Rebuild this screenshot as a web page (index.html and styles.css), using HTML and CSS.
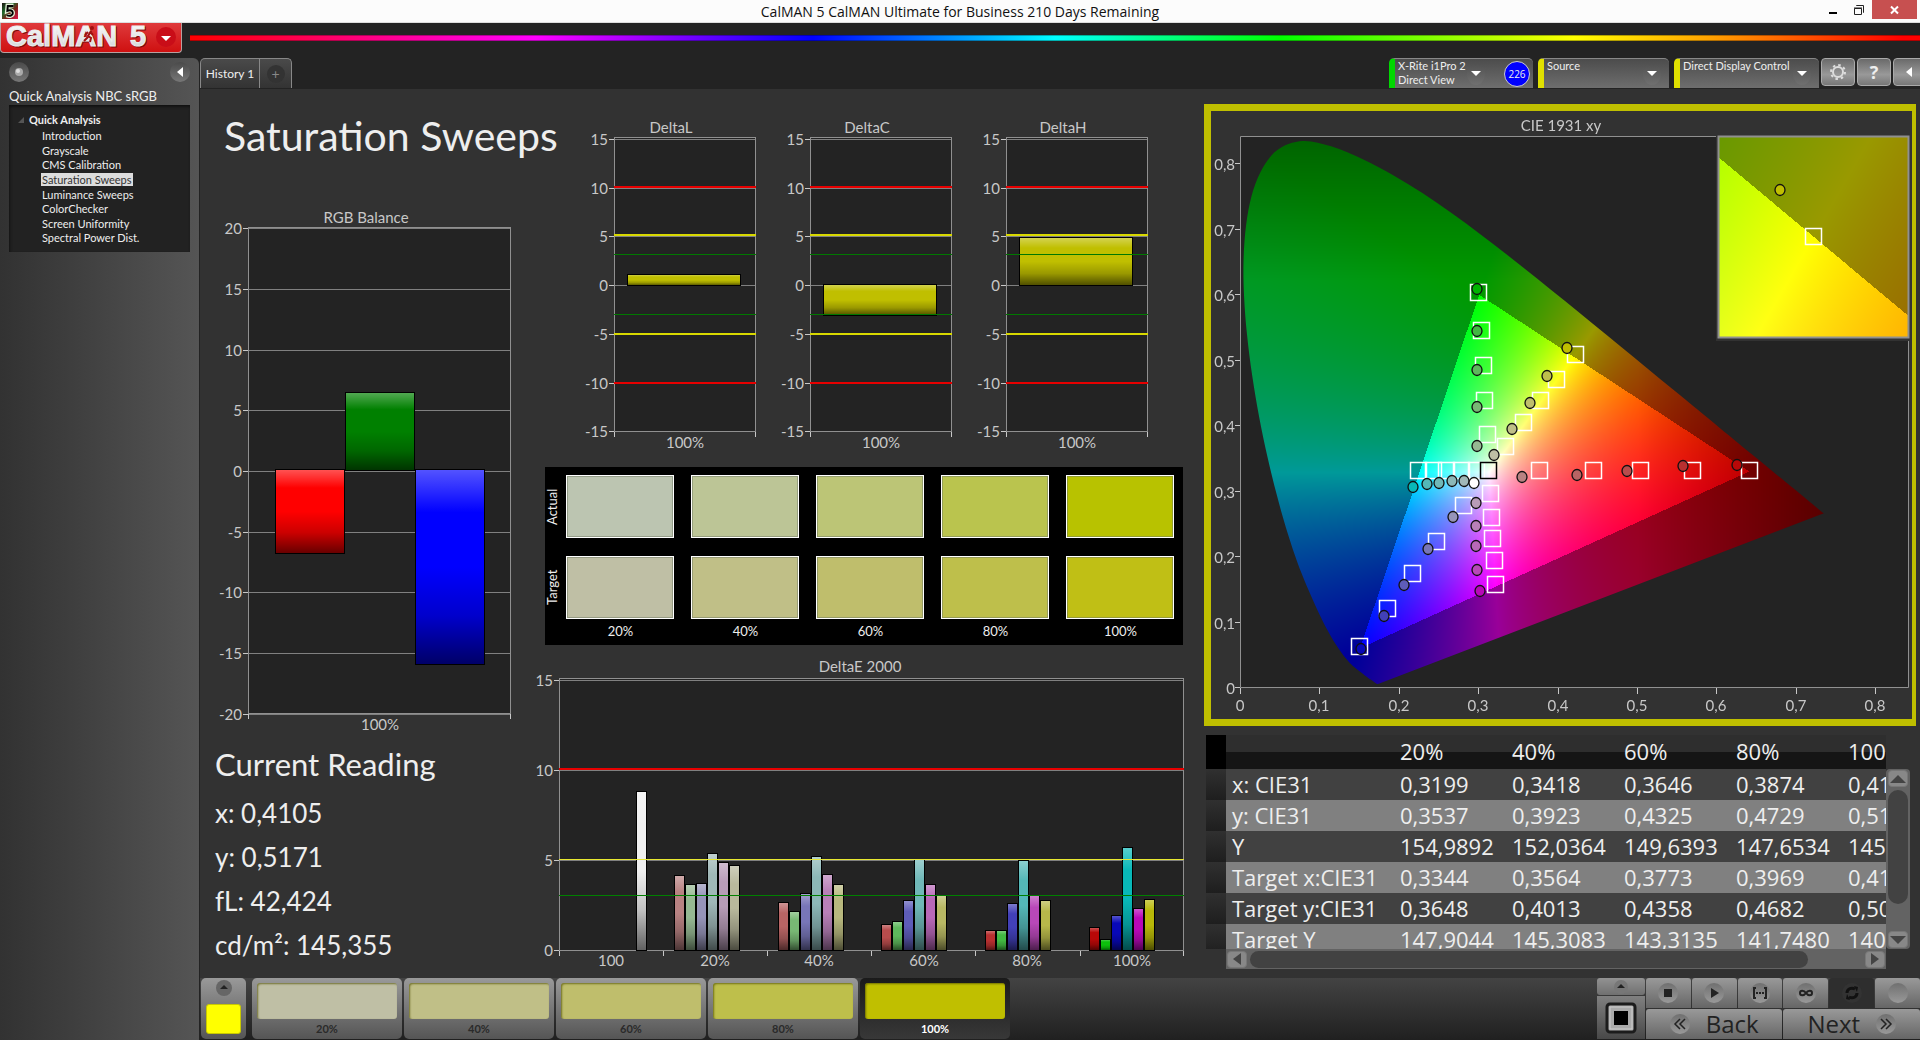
FILE: index.html
```html
<!DOCTYPE html>
<html lang="en">
<head>
<meta charset="utf-8">
<title>CalMAN 5 CalMAN Ultimate for Business 210 Days Remaining</title>
<link rel="stylesheet" href="styles.css">
</head>
<body>
<div class="titlebar">
  <svg class="app-icon" viewBox="0 0 16 16" aria-hidden="true">
    <defs><linearGradient id="app" x1="0" y1="0" x2="1" y2="1"><stop offset="0" stop-color="#1d1410"/><stop offset=".35" stop-color="#1f6b2c"/><stop offset=".6" stop-color="#7c2018"/><stop offset="1" stop-color="#e01850"/></linearGradient></defs>
    <rect width="16" height="16" fill="url(#app)"/>
    <path d="M11.5 2.5H5.5L5 8c3-1.500 6-.500 6 2s-3 4-6.500 2.500" fill="none" stroke="#e4f0d8" stroke-width="4"/>
    <path d="M11.500 3H5.800L5.400 7.800c3-1.200 5.400-.300 5.400 2.200s-3 3.600-6 2.200" fill="none" stroke="#000" stroke-width="2"/>
  </svg>
  <span class="window-title">CalMAN 5 CalMAN Ultimate for Business 210 Days Remaining</span>
  <div class="window-buttons">
    <button class="win" aria-label="Minimize"><svg width="12" height="12"><path d="M2 8h8v2H2z"/></svg></button>
    <button class="win" aria-label="Restore"><svg width="12" height="12"><path d="M1.500 4.500h7v6h-7zM1 4h8M3.500 2V1.500h7v7H10" fill="none" stroke="#222"/></svg></button>
    <button class="win close" aria-label="Close"><svg width="12" height="12"><path d="M2 2.500l7 7M9 2.500l-7 7" stroke="#fff" stroke-width="2"/></svg></button>
  </div>
</div>

<header class="brand">
  <button class="logo" aria-label="CalMAN 5 menu">
    <svg viewBox="0 0 182 29" width="182" height="29">
      <defs><linearGradient id="steel" x1="0" y1="0" x2="0" y2="1"><stop offset="0" stop-color="#fff"/><stop offset="1" stop-color="#cdd2d4"/></linearGradient></defs>
      <g font-family="Liberation Sans, sans-serif" font-weight="700" font-size="29" stroke-width="1">
        <text x="6" y="24" fill="#7d0b0b" stroke="#7d0b0b">CalMAN</text><text x="130" y="24" fill="#7d0b0b" stroke="#7d0b0b">5</text>
        <text x="5" y="23" fill="url(#steel)" stroke="#eee">CalMAN</text><text x="129" y="23" fill="url(#steel)" stroke="#eee">5</text>
      </g>
      <path d="M90 8l-3 5 3 2-1 4M87 9l-3 3M89 9l3 3M87 14l-4 4" stroke="#a01010" stroke-width="2" fill="none"/>
      <circle cx="91" cy="5" r="2" fill="#a01010"/>
      <ellipse cx="165" cy="14" rx="10" ry="10" fill="#c90d18"/>
      <path d="M160 13h10l-5 5z" fill="#fff"/>
    </svg>
  </button>
  <div class="spectrum"></div>
</header>

<div class="shell">
  <aside class="sidebar">
    <div class="side-tools">
      <button class="knob" aria-label="Record"><svg width="20" height="20"><circle cx="10" cy="10" r="4" fill="#aaa"/><circle cx="9" cy="9" r="2" fill="#ddd"/></svg></button>
      <button class="knob" aria-label="Collapse"><svg width="20" height="20"><path d="M13 5v10l-6-5z" fill="#fff"/></svg></button>
    </div>
    <h2 class="side-title">Quick Analysis NBC sRGB</h2>
    <nav class="tree">
      <div class="branch"><svg width="6" height="6"><path d="M6 0v6H0z" fill="#555"/></svg>Quick Analysis</div>
      <ul>
        <li><a href="#">Introduction</a></li>
        <li><a href="#">Grayscale</a></li>
        <li><a href="#">CMS Calibration</a></li>
        <li><a href="#" class="current">Saturation Sweeps</a></li>
        <li><a href="#">Luminance Sweeps</a></li>
        <li><a href="#">ColorChecker</a></li>
        <li><a href="#">Screen Uniformity</a></li>
        <li><a href="#">Spectral Power Dist.</a></li>
      </ul>
    </nav>
  </aside>

  <div class="workspace">
    <div class="toolbar">
      <div class="tabs">
        <button class="tab">History 1</button>
        <button class="tab add" aria-label="Add tab"><span class="plus">+</span></button>
      </div>
      <div class="devices">
        <div class="device meter"><button class="device-name">X-Rite i1Pro 2<br>Direct View</button><span class="drop"></span><span class="badge">226</span></div>
        <div class="device source"><button class="device-name">Source</button><span class="drop"></span></div>
        <div class="device display"><button class="device-name">Direct Display Control</button><span class="drop"></span></div>
        <button class="tool" aria-label="Settings"><svg width="22" height="22"><circle cx="11" cy="11" r="5" fill="none" stroke="#ddd" stroke-width="2"/><circle cx="11" cy="11" r="7" fill="none" stroke="#ddd" stroke-width="2" stroke-dasharray="2.500 3"/></svg></button>
        <button class="tool help" aria-label="Help">?</button>
        <button class="tool cut" aria-label="Expand"><svg width="20" height="20"><path d="M12 5v10l-6-5z" fill="#fff"/></svg></button>
      </div>
    </div>

    <main class="content">
      <section class="col-left">
        <h1>Saturation Sweeps</h1>
        <svg class="chart" id="rgb" viewBox="0 0 330 525"></svg>
        <div class="readings">
          <h2>Current Reading</h2>
          <p>x: 0,4105</p>
          <p>y: 0,5171</p>
          <p>fL: 42,424</p>
          <p>cd/m²: 145,355</p>
        </div>
      </section>

      <section class="col-mid">
        <div class="deltas">
          <svg class="chart" id="deltaL" viewBox="0 0 196 341"></svg>
          <svg class="chart" id="deltaC" viewBox="0 0 196 341"></svg>
          <svg class="chart" id="deltaH" viewBox="0 0 196 341"></svg>
        </div>
        <div class="swatches">
          <span class="side">Actual</span>
          <i class="sw a20"></i><i class="sw a40"></i><i class="sw a60"></i><i class="sw a80"></i><i class="sw a100"></i>
          <span class="side">Target</span>
          <i class="sw t20"></i><i class="sw t40"></i><i class="sw t60"></i><i class="sw t80"></i><i class="sw t100"></i>
          <span></span><b>20%</b><b>40%</b><b>60%</b><b>80%</b><b>100%</b>
        </div>
        <svg class="chart" id="deltaE" viewBox="0 0 670 325"></svg>
      </section>

      <section class="col-right">
        <div class="cie">
          <canvas id="gamut" width="701" height="608"></canvas>
          <svg class="chart" id="cie" viewBox="1211 111 701 608"></svg>
        </div>
        <div class="grid-box">
          <div class="grid-view">
            <table>
              <colgroup><col class="c-head"><col class="c-label"><col class="c-val"><col class="c-val"><col class="c-val"><col class="c-val"><col class="c-val"></colgroup>
              <thead><tr><td></td><td></td><th>20%</th><th>40%</th><th>60%</th><th>80%</th><th>100%</th></tr></thead>
              <tbody>
                <tr><td></td><th>x: CIE31</th><td>0,3199</td><td>0,3418</td><td>0,3646</td><td>0,3874</td><td>0,4105</td></tr>
                <tr><td></td><th>y: CIE31</th><td>0,3537</td><td>0,3923</td><td>0,4325</td><td>0,4729</td><td>0,5171</td></tr>
                <tr><td></td><th>Y</th><td>154,9892</td><td>152,0364</td><td>149,6393</td><td>147,6534</td><td>145,3550</td></tr>
                <tr><td></td><th>Target x:CIE31</th><td>0,3344</td><td>0,3564</td><td>0,3773</td><td>0,3969</td><td>0,4193</td></tr>
                <tr><td></td><th>Target y:CIE31</th><td>0,3648</td><td>0,4013</td><td>0,4358</td><td>0,4682</td><td>0,5053</td></tr>
                <tr><td></td><th>Target Y</th><td>147,9044</td><td>145,3083</td><td>143,3135</td><td>141,7480</td><td>140,3550</td></tr>
              </tbody>
            </table>
          </div>
          <div class="scroll vertical">
            <button aria-label="Scroll up"><svg width="16" height="8"><path d="M0 8h16L8 0z"/></svg></button>
            <span class="thumb"></span>
            <button aria-label="Scroll down"><svg width="16" height="8"><path d="M0 0h16L8 8z"/></svg></button>
          </div>
          <div class="scroll horizontal">
            <button aria-label="Scroll left"><svg width="8" height="12"><path d="M8 0v12L0 6z"/></svg></button>
            <span class="thumb"></span>
            <button aria-label="Scroll right"><svg width="8" height="12"><path d="M0 0v12l8-6z"/></svg></button>
          </div>
        </div>
      </section>
    </main>

    <footer class="dock">
      <button class="pattern" aria-label="Pattern color"><svg width="16" height="16"><circle cx="8" cy="8" r="8" fill="#666"/><path d="M4 9l4-4 4 4z" fill="#222"/></svg><i></i></button>
      <div class="steps">
        <button class="step"><i class="t20"></i>20%</button>
        <button class="step"><i class="t40"></i>40%</button>
        <button class="step"><i class="t60"></i>60%</button>
        <button class="step"><i class="t80"></i>80%</button>
        <button class="step active"><i class="y100"></i>100%</button>
      </div>
      <div class="window-mode">
        <button aria-label="Show more"><svg width="16" height="16"><circle cx="8" cy="8" r="7" fill="#777"/><path d="M4 9l4-4 4 4z" fill="#222"/></svg></button>
        <button aria-label="Window size"><svg width="32" height="32"><rect x="2" y="2" width="28" height="28" rx="3" fill="#aaa" stroke="#1c1c1c" stroke-width="3"/><rect x="5" y="5" width="22" height="22" fill="none" stroke="#ccc"/><path d="M9 9h14v14H9z"/></svg></button>
      </div>
      <div class="transport">
        <button aria-label="Stop"><svg width="20" height="20"><path d="M6 6h8v8H6z"/></svg></button>
        <button aria-label="Play"><svg width="20" height="20"><path d="M7 5v10l8-5z"/></svg></button>
        <button aria-label="Read series"><svg width="20" height="20"><path d="M6 5H4v10h2M14 5h2v10h-2M6 10h2M9 10h2M12 10h2" fill="none" stroke="#222" stroke-width="2"/></svg></button>
        <button aria-label="Read continuous"><svg width="20" height="20"><path d="M10 10c-2-3-6-3-6 0s4 3 6 0 6-3 6 0-4 3-6 0z" fill="none" stroke="#222" stroke-width="2"/></svg></button>
        <button class="pressed" aria-label="Refresh"><svg width="20" height="20"><path d="M5 10c0-4 4-6 8-4M15 10c0 4-4 6-8 4" fill="none" stroke="#111" stroke-width="3"/><path d="M12 3l4 1-1 5zM8 17l-4-1 1-5z" fill="#111"/></svg></button>
        <button aria-label="Blank"><svg width="20" height="20"></svg></button>
        <button class="wide"><svg width="20" height="20"><path d="M10 5l-5 5 5 5M15 5l-5 5 5 5" fill="none" stroke="#222" stroke-width="1.500"/></svg>Back</button>
        <button class="wide">Next<svg width="20" height="20"><path d="M5 5l5 5-5 5M10 5l5 5-5 5" fill="none" stroke="#222" stroke-width="1.500"/></svg></button>
      </div>
    </footer>
  </div>
</div>
<script src="charts.js"></script>
</body>
</html>
```
FILE: styles.css
```css
* { box-sizing: border-box; }
body {
  margin: 0;
  min-height: 100vh;
  display: flex;
  flex-direction: column;
  background: #232323;
  color: #eee;
  font: 12px/15px Lato, Carlito, sans-serif;
  overflow-x: hidden;
}
button { font: inherit; color: inherit; border: 0; padding: 0; background: none; }
h1, h2, p, ul { margin: 0; padding: 0; font-weight: 400; }
svg { display: block; flex: none; }

.titlebar {
  height: 23px;
  display: grid;
  grid-template-columns: 1fr auto 1fr;
  align-items: start;
  background: #fcfcfc;
  border-bottom: 1px solid #ddd;
  color: #111;
}
.app-icon { width: 16px; height: 16px; margin: 3px 2px; }
.window-title { font: 14px/23px "Open Sans", "Noto Sans", sans-serif; }
.window-buttons { display: flex; justify-content: flex-end; padding-right: 3px; }
.win { width: 26px; height: 19px; display: flex; align-items: center; justify-content: center; }
.win.close { width: 45px; background: #c75050; }

.brand { height: 35px; display: flex; gap: 8px; }
.logo {
  width: 182px;
  height: 30px;
  background: linear-gradient(#df3a3c, #cf1010);
  border: 1px solid #b9a0a0;
  border-width: 0 1px 1px;
  border-radius: 0 0 4px 4px;
}
.spectrum {
  flex: 1;
  height: 6px;
  margin-top: 12px;
  background: linear-gradient(90deg, #f00, #f0f 20%, #00f 36%, #0ff 50%, #0f0 63%, #ff0 80%, #ffa000 88%, #f00 99%);
  border: 1px solid rgba(0, 0, 0, .3);
  border-width: 1px 0;
}

.shell { flex: 1; display: grid; grid-template-columns: 199px minmax(0, 1fr); column-gap: 1px; }
.sidebar {
  padding: 4px 9px 0;
  background: linear-gradient(90deg, #323232, #3c3c3c 30%, #555);
  border-radius: 0 6px 0 0;
}
.side-tools { display: flex; justify-content: space-between; }
.knob { width: 20px; height: 20px; border-radius: 50%; background: linear-gradient(#4a4a4a, #777); }
.side-title { font-size: 13px; line-height: 16px; margin-top: 6px; }
.tree {
  margin-top: 1px;
  height: 147px;
  padding: 7px 0 0 9px;
  background: #222;
  box-shadow: inset 1px 2px 3px #111;
  font-size: 11px;
}
.branch { display: flex; align-items: center; gap: 5px; font-weight: 700; }
.tree ul { list-style: none; display: grid; height: 117px; margin-top: 2px; padding-left: 23px; line-height: 14px; }
.tree a { color: #eee; text-decoration: none; padding: 0 1px; }
.tree .current { background: #ddd; color: #333; }

.workspace { display: flex; flex-direction: column; min-width: 0; }
.toolbar { height: 31px; display: flex; justify-content: space-between; overflow: hidden; }
.tabs { display: flex; height: 30px; border: 1px solid #888; border-bottom: 0; border-radius: 5px 5px 0 0; background: linear-gradient(#4a4a4a, #333); }
.tab { width: 58px; }
.add { width: 32px; border-left: 1px solid #888; display: flex; align-items: center; justify-content: center; }
.plus { width: 18px; height: 18px; border-radius: 50%; background: #333; color: #888; font-size: 14px; line-height: 17px; }
.devices { display: flex; margin-right: -7px; gap: 2px; }
.device {
  height: 30px;
  display: flex;
  align-items: center;
  margin-right: 3px;
  border-top: 1px solid #888;
  border-radius: 5px 5px 0 0;
  border-left: 6px solid #e0e000;
  background: linear-gradient(#4c4c4c, #6e6e6e);
}
.meter { width: 144px; border-left-color: #00d800; }
.source { width: 131px; }
.display { width: 145px; margin-right: 0; }
.device-name { flex: 1; align-self: flex-start; text-align: left; font-size: 11px; line-height: 14px; padding-left: 3px; white-space: nowrap; }
.drop { width: 18px; height: 22px; border-radius: 50%; background: linear-gradient(#505050, #707070); display: flex; align-items: center; justify-content: center; margin-right: 8px; }
.meter .drop { margin-right: 11px; }
.drop::after { content: ""; border: 5px solid transparent; border-top-color: #fff; border-bottom: 0; }
.badge { width: 26px; height: 26px; border-radius: 50%; background: #00f; border: 1px solid #ccc; font: 10px/24px "Open Sans", sans-serif; text-align: center; margin: 0 3px 0 8px; }
.tool { width: 34px; height: 28px; border: 1px solid #aaa; border-radius: 4px; background: linear-gradient(#6a6a6a, #999 60%, #777); display: flex; align-items: center; justify-content: center; }
.help { font: 700 18px/24px "Open Sans", sans-serif; }

.content {
  flex: 1;
  display: grid;
  grid-template-columns: 330fr 670fr 720fr;
  background: #323232;
}
.content > section { min-width: 0; }
.chart { width: 100%; height: auto; font-family: Lato, sans-serif; font-size: 15px; fill: #c8c8c8; }
h1 { font-size: 41px; line-height: 48px; padding: 23px 0 52px 24px; white-space: nowrap; }
.readings { padding-left: 15px; }
.readings h2 { font-size: 31px; line-height: 54px; }
.readings p { font-size: 26px; line-height: 44px; }

.col-mid { padding-top: 24px; }
.deltas { display: grid; grid-template-columns: repeat(3, minmax(0, 1fr)); padding: 0 40px 0 42px; }
.swatches {
  margin: 13px 17px 0 15px;
  height: 178px;
  padding-top: 8px;
  display: grid;
  grid-template-columns: 13px repeat(5, minmax(0, 1fr));
  grid-template-rows: 63px 63px 18px;
  row-gap: 18px;
  background: #000;
  font-size: 13px;
}
.swatches b { font-weight: 400; text-align: center; margin-top: -15px; line-height: 18px; }
.side { writing-mode: vertical-rl; transform: rotate(180deg); text-align: center; }
.sw { border: 1px solid #fff; margin: 0 9px 0 8px; box-shadow: inset 0 0 0 1px rgba(110, 120, 100, .5); }
.a20 { background: #bcc5b1; } .a40 { background: #bcc596; } .a60 { background: #bcc576; }
.a80 { background: #bac44e; } .a100 { background: #b8c200; }
.t20 { background: #bfbfa5; } .t40 { background: #c0bf87; } .t60 { background: #bfbe6c; }
.t80 { background: #bebf4b; } .t100 { background: #c0bf15; } .y100 { background: #c0bf00; }
#deltaE { margin-top: 5px; }

.cie { display: grid; margin: 15px 4px 0; border: 7px solid #bfbf00; border-right-width: 4px; }
.cie > * { grid-area: 1 / 1; width: 100%; height: auto; }

.grid-box {
  margin: 9px 10px 0 6px;
  display: grid;
  grid-template-columns: minmax(0, 1fr) 24px;
  grid-template-rows: 214px 20px;
}
.grid-view { overflow: hidden; }
table { border-collapse: collapse; table-layout: fixed; width: 748px; font: 22px/24px "Open Sans", "Noto Sans", sans-serif; }
.c-head { width: 20px; } .c-label { width: 168px; } .c-val { width: 112px; }
td, th { height: 31px; padding: 0 0 2px 6px; text-align: left; font-weight: 400; white-space: nowrap; }
td:first-child { padding: 0; }
thead { background: linear-gradient(#2e2e2e 50%, #151515 50%); }
thead td, thead th { height: 34px; }
thead td:first-child { background: #000; }
tbody tr { background: #414141; }
tbody tr:nth-child(even) { background: #808080; }
tbody td:first-child { background: linear-gradient(#303030, #1e1e1e); }
.scroll { display: flex; align-items: center; background: #636363; padding: 1px; gap: 3px; }
.scroll button { background: #888; border: 1px solid #777; border-radius: 4px; display: flex; align-items: center; justify-content: center; fill: #444; }
.scroll .thumb { background: #424242; border-radius: 10px; flex: 1; }
.vertical { flex-direction: column; margin-top: 34px; border-radius: 4px; }
.vertical button { width: 20px; height: 17px; }
.vertical .thumb { width: 20px; margin-bottom: 24px; }
.horizontal { margin-left: 20px; }
.horizontal button { width: 20px; height: 17px; }
.horizontal .thumb { height: 17px; margin-right: 54px; }

.dock { height: 62px; display: flex; padding: 0 0 1px 1px; background: linear-gradient(#434343, #202020); }
.pattern, .step { border-radius: 5px; background: linear-gradient(#999, #555); }
.pattern { width: 45px; display: flex; flex-direction: column; align-items: center; justify-content: space-between; padding: 2px 0 5px; }
.pattern i { width: 35px; height: 30px; border-radius: 3px; background: #ff0; border: 1px solid #c8c800; }
.steps { display: flex; gap: 2px; margin-left: 6px; }
.step { width: 150px; padding: 5px 5px 0; color: #2a2a2a; font-size: 11px; font-weight: 700; line-height: 20px; display: flex; flex-direction: column; align-items: center; }
.step i { width: 140px; height: 36px; border-radius: 3px; box-shadow: inset 1px 1px 2px rgba(80, 80, 0, .7); }
.step.active { background: linear-gradient(#1a1a1a, #383838); color: #fff; }
.window-mode { width: 48px; margin-left: auto; display: grid; grid-template-rows: 17px 1fr; row-gap: 1px; }
.window-mode button { background: linear-gradient(#929292, #707070); display: flex; align-items: center; justify-content: center; border-radius: 3px; }
.window-mode button + button { background: linear-gradient(#808080, #484848); border-radius: 0; }
.transport { width: 274px; margin-left: 1px; display: grid; grid-template: 30px 30px / repeat(6, 1fr); gap: 1px; }
.transport button { background: linear-gradient(#999, #666); border-radius: 3px 3px 0 0; display: flex; align-items: center; justify-content: center; fill: #222; color: #222; }
.transport svg { border-radius: 50%; background: linear-gradient(#707070, #999); }
.transport .pressed { background: #2e2e2e; }
.transport .pressed svg { background: #333; }
.transport .wide { grid-column: span 3; gap: 16px; font: 24px/28px "Open Sans", "Noto Sans", sans-serif; }
```
FILE: charts.js
```js
const NS = 'http://www.w3.org/2000/svg';
let nextId = 0;

function add(parent, tag, attrs, text) {
  const node = document.createElementNS(NS, tag);
  for (const key in attrs) node.setAttribute(key, attrs[key]);
  if (text !== undefined) node.textContent = text;
  parent.appendChild(node);
  return node;
}

function hline(svg, x1, x2, y, color, width) {
  add(svg, 'rect', { x: x1, y: y, width: x2 - x1, height: width, fill: color });
}

// Bar chart: pixel plot box, one value axis, coloured bars with a gloss overlay.
function barChart(id, o) {
  const svg = document.getElementById(id);
  const [l, t, r, b] = o.plot;
  const gloss = 'gloss' + nextId++;
  const grad = add(add(svg, 'defs', {}), 'linearGradient', { id: gloss, x1: 0, y1: 0, x2: 0, y2: 1 });
  [[0, '#fff', .33], [.22, '#fff', 0], [.5, '#000', 0], [.75, '#000', .2], [1, '#000', .6]].forEach(s =>
    add(grad, 'stop', { offset: s[0], 'stop-color': s[1], 'stop-opacity': s[2] }));

  add(svg, 'rect', { x: l, y: t, width: r - l, height: b - t, fill: '#232323' });
  add(svg, 'text', { x: o.titleX, y: o.titleY, 'text-anchor': 'middle' }, o.title);
  const y = v => Math.round(o.zero - v * o.scale);
  for (let v = o.max; v >= o.min; v -= 5) {
    hline(svg, l, r, y(v), '#808080', 1);
    hline(svg, l - 5, l, y(v), '#c8c8c8', 1);
    add(svg, 'text', { x: l - 6, y: y(v) + 6, 'text-anchor': 'end' }, v);
  }
  add(svg, 'rect', { x: l + .5, y: t + .5, width: r - l - 1, height: b - t - 1, fill: 'none', stroke: '#909090' });
  for (const bar of o.bars) {
    const box = { x: bar[0] + .5, y: bar[2] + .5, width: bar[1] - bar[0], height: bar[3] - bar[2] };
    add(svg, 'rect', { ...box, fill: bar[4] });
    add(svg, 'rect', { ...box, fill: `url(#${gloss})`, stroke: '#000' });
  }
  for (const m of o.marks || []) hline(svg, l, r, m[0], m[1], m[2]);
  for (const x of o.xticks) add(svg, 'rect', { x: x, y: b, width: 1, height: 5, fill: '#c8c8c8' });
  for (const [x, s] of o.xlabels) add(svg, 'text', { x: x, y: o.labelY, 'text-anchor': 'middle' }, s);
}

barChart('rgb', {
  plot: [48, 15, 311, 502], title: 'RGB Balance', titleX: 166, titleY: 11, zero: 259, scale: 12.13, max: 20, min: -20,
  bars: [[75, 144, 257, 341, '#f00'], [145, 214, 180, 258, '#008000'], [215, 284, 257, 452, '#00f']],
  xticks: [48, 310], xlabels: [[180, '100%']], labelY: 518
});

const limits = [[73, '#e60000', 2], [121, '#d8d800', 2], [141, '#007800', 1], [201, '#007800', 1], [220, '#d8d800', 2], [269, '#e60000', 2]];
const delta = (id, bars) => barChart(id, {
  plot: [42, 24, 184, 319], title: 'Delta' + id.slice(-1), titleX: 99, titleY: 20, zero: 172, scale: 9.75, max: 15, min: -15,
  bars, marks: limits, xticks: [42, 183], xlabels: [[113, '100%']], labelY: 335
});
delta('deltaL', [[55, 168, 161, 172, '#c0bf00']]);
delta('deltaC', [[55, 168, 171, 202, '#c0bf00']]);
delta('deltaH', [[55, 168, 124, 172, '#c0bf00']]);

const series = [
  [144, ['#b88282', 225], ['#96b892', 234], ['#9694b8', 233], ['#a0b8b8', 203], ['#b89cb8', 212], ['#b8b89c', 215]],
  [248, ['#b86464', 252], ['#78b874', 261], ['#7876b8', 243], ['#8cb8b8', 206], ['#b880b8', 224], ['#b8b87e', 234]],
  [351, ['#b84c4c', 274], ['#5eb85c', 271], ['#5e5cb8', 250], ['#70b8b8', 209], ['#b868b8', 234], ['#b8b864', 245]],
  [455, ['#b83030', 280], ['#42b842', 280], ['#4240b8', 253], ['#54b8b8', 210], ['#b848b8', 245], ['#b8b84a', 250]],
  [559, ['#b80808', 277], ['#0cc00c', 289], ['#0808b8', 265], ['#08b8b8', 197], ['#b808b8', 258], ['#b8b808', 249]]
];
const sweepBars = [[106, 116, 141, 300, '#f0f0f0']];
for (const [start, ...set] of series)
  set.forEach(([color, top], i) => sweepBars.push([start + i * 11, start + i * 11 + 10, top, 300, color]));
barChart('deltaE', {
  plot: [29, 28, 654, 301], title: 'DeltaE 2000', titleX: 330, titleY: 22, zero: 300, scale: 18, max: 15, min: 0,
  bars: sweepBars, marks: [[118, '#e60000', 2], [209, '#e8e830', 1], [245, '#008000', 1]],
  xticks: [29, 133, 237, 341, 445, 550, 653],
  xlabels: [[81, '100'], [185, '20%'], [289, '40%'], [394, '60%'], [497, '80%'], [602, '100%']], labelY: 316
});

// CIE 1931 diagram
const locus = [[.1741,.005],[.1714,.0051],[.1644,.0109],[.1566,.0177],[.144,.0297],[.1355,.0399],[.1241,.0578],[.1096,.0868],[.0913,.1327],[.0687,.2007],[.0454,.295],[.0235,.4127],[.0082,.5384],[.0039,.6548],[.0139,.7502],[.0389,.812],[.0743,.8338],[.1142,.8262],[.1547,.8059],[.1929,.7816],[.2296,.7543],[.2658,.7243],[.3016,.6923],[.3373,.6589],[.3731,.6245],[.4087,.5896],[.4441,.5547],[.4788,.5202],[.5125,.4866],[.5448,.4544],[.5752,.4242],[.6029,.3965],[.627,.3725],[.6482,.3514],[.6658,.334],[.6801,.3197],[.6915,.3083],[.7006,.2993],[.714,.2859],[.7347,.2653]];

function colorAt(x, y) {
  const X = x / y, Z = (1 - x - y) / y;
  const c = [3.2406 * X - 1.5372 - .4986 * Z, -.9689 * X + 1.8758 + .0415 * Z, .0557 * X - .204 + 1.057 * Z];
  const peak = Math.max(...c);
  let dim = Math.min(...c) < 0 ? .6 : 1;
  if (x > .5) dim *= 1 - (x - .5) * 1.8;
  if (y > .62) dim *= 1 - (y - .62) * 1.6;
  return c.map(v => 255 * dim * Math.max(v, 0) / peak);
}

function paint(w, h, toXY) {
  const cv = document.createElement('canvas');
  cv.width = w; cv.height = h;
  const c = cv.getContext('2d'), img = c.createImageData(w, h);
  for (let j = 0; j < h; j++) for (let i = 0; i < w; i++) {
    const [x, y] = toXY(i, j);
    const rgb = colorAt(x, Math.max(y, .001)), k = (j * w + i) * 4;
    img.data[k] = rgb[0]; img.data[k + 1] = rgb[1]; img.data[k + 2] = rgb[2]; img.data[k + 3] = 255;
  }
  c.putImageData(img, 0, 0);
  return cv;
}

const ctx = document.getElementById('gamut').getContext('2d');
ctx.fillStyle = '#323232';
ctx.fillRect(0, 0, 701, 608);
ctx.fillStyle = '#232323';
ctx.fillRect(29, 25, 669, 551);
ctx.save();
ctx.beginPath();
const pts = locus.map(p => [29.5 + 794 * p[0], 576 - 654.5 * p[1]]);
ctx.moveTo(...pts[0]);
// Catmull-Rom spline through the spectral locus
for (let i = 0; i < pts.length - 1; i++) {
  const a = pts[Math.max(i - 1, 0)], p = pts[i], q = pts[i + 1], d = pts[Math.min(i + 2, pts.length - 1)];
  ctx.bezierCurveTo(p[0] + (q[0] - a[0]) / 6, p[1] + (q[1] - a[1]) / 6, q[0] - (d[0] - p[0]) / 6, q[1] - (d[1] - p[1]) / 6, q[0], q[1]);
}
ctx.closePath();
ctx.clip();
ctx.drawImage(paint(701, 608, (i, j) => [(i - 29.5) / 794, (576 - j) / 654.5]), 0, 0);
ctx.restore();
ctx.fillStyle = '#323232';
ctx.fillRect(505, 24, 193, 206);
ctx.drawImage(paint(189, 200, (i, j) => [.4193 + (i - 94) / 3732, .5053 - (j - 99) / 3927]), 508, 26);

const cie = document.getElementById('cie');
add(cie, 'text', { x: 1561, y: 131, 'text-anchor': 'middle' }, 'CIE 1931 xy');
add(cie, 'path', { d: 'M1716 136.5H1240.500V687.500H1908.500V341', fill: 'none', stroke: '#909090' });
add(cie, 'rect', { x: 1718.5, y: 136.5, width: 190, height: 201, fill: 'none', stroke: '#909090', 'stroke-width': 2 });
for (let i = 0; i <= 8; i++) {
  const label = i ? '0,' + i : '0', x = Math.round(1240 + 79.4 * i), y = Math.round(687 - 65.45 * i);
  add(cie, 'rect', { x: x, y: 688, width: 1, height: 6, fill: '#c8c8c8' });
  add(cie, 'text', { x: x, y: 711, 'text-anchor': 'middle' }, label);
  add(cie, 'rect', { x: 1235, y: y, width: 5, height: 1, fill: '#c8c8c8' });
  add(cie, 'text', { x: 1235, y: y + 7, 'text-anchor': 'end' }, label);
}
const square = (x, y, c = '#fff') => add(cie, 'rect', { x: x - 7.5, y: y - 8.5, width: 16, height: 16, fill: 'none', stroke: c, 'stroke-width': 1.5 });
const dot = (x, y, c) => add(cie, 'ellipse', { cx: x, cy: y, rx: 5, ry: 5.5, fill: c, stroke: '#111', 'stroke-width': 1.3 });
[[1478,293],[1481,331],[1483,366],[1484,401],[1487,435],[1505,447],[1523,423],[1540,401],[1556,380],[1575,355],
 [1539,471],[1593,471],[1640,471],[1692,471],[1749,471],[1418,471],[1433,471],[1446,471],[1461,471],[1476,471],
 [1490,494],[1491,518],[1492,539],[1494,561],[1495,585],[1463,506],[1436,542],[1412,574],[1387,609],[1359,647],[1813,237]
].forEach(p => square(...p));
square(1488, 471, '#000');
[[1477,289,'#00b400'],[1477,331,'#42b842'],[1477,370,'#5eb85c'],[1477,407,'#78b874'],[1477,446,'#96b892'],
 [1567,348,'#c0bf00'],[1547,376,'#bebf4b'],[1530,403,'#bfbe6c'],[1512,429,'#c0bf87'],[1494,455,'#bfbfa5'],
 [1522,477,'#b88282'],[1577,475,'#b86464'],[1627,471,'#b84c4c'],[1683,466,'#b83030'],[1737,465,'#b80808'],
 [1413,487,'#08b8b8'],[1427,484,'#54b8b8'],[1439,483,'#70b8b8'],[1452,481,'#8cb8b8'],[1464,481,'#a0b8b8'],[1474,483,'#fff'],
 [1476,503,'#b89cb8'],[1476,526,'#b880b8'],[1476,546,'#b868b8'],[1477,570,'#b848b8'],[1480,591,'#b808b8'],
 [1453,517,'#9694b8'],[1428,549,'#7876b8'],[1404,585,'#5e5cb8'],[1384,616,'#4240b8'],[1361,649,'#0808b8'],[1780,190,'#c0bf00']
].forEach(p => dot(...p));
```
